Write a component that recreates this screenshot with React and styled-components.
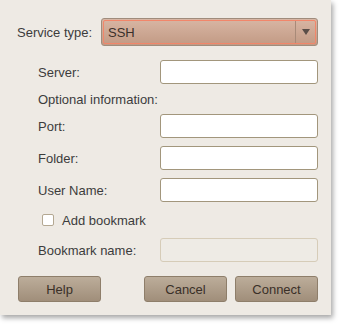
import React from "react";
import styled, { createGlobalStyle } from "styled-components";

const Global = createGlobalStyle`
  html, body { margin: 0; padding: 0; background: #ffffff; }
  body { font-family: "Liberation Sans", Arial, sans-serif; font-size: 13px; color: #3c3c3c; }
  #root { width: 340px; height: 324px; }
`;

const Panel = styled.div`
  width: 331px;
  height: 315px;
  box-sizing: border-box;
  background: #eeeae4;
  box-shadow: 2px 3px 5px rgba(0, 0, 0, 0.35);
  padding: 18px 13px 0 17px;
  display: flex;
  flex-direction: column;
`;

const ServiceRow = styled.div`
  display: grid;
  grid-template-columns: 84px 217px;
  align-items: center;
  height: 28px;
`;

const Label = styled.span`
  color: #3c3c3c;
  font-size: 13px;
  white-space: nowrap;
`;

const Combo = styled.div`
  height: 28px;
  box-sizing: border-box;
  border: 1px solid #a08c7c;
  border-radius: 3px;
  background: linear-gradient(#d8b6a4, #c29a84);
  padding: 1px;
  display: flex;
`;

const ComboInner = styled.div`
  flex: 1;
  display: flex;
  align-items: center;
  border: 1px solid #f2866a;
  border-radius: 2px;
`;

const ComboText = styled.span`
  flex: 1;
  padding-left: 4px;
  color: #3a302a;
  font-size: 13px;
`;

const ComboArrow = styled.div`
  width: 19px;
  align-self: stretch;
  border-left: 1px solid #a88a78;
  display: flex;
  align-items: center;
  justify-content: center;
`;

const Form = styled.div`
  padding-left: 21px;
  display: flex;
  flex-direction: column;
`;

const FieldRow = styled.div`
  display: grid;
  grid-template-columns: 122px 158px;
  align-items: center;
  height: 24px;
  margin-top: ${(p) => p.$gap}px;
`;

const Entry = styled.div`
  height: 24px;
  box-sizing: border-box;
  border: 1px solid ${(p) => (p.$disabled ? "#d6ccb8" : "#a2967c")};
  border-radius: 3px;
  background: ${(p) => (p.$disabled ? "#eeebe5" : "#ffffff")};
`;

const TextRow = styled.div`
  height: 30px;
  display: flex;
  align-items: center;
`;

const CheckRow = styled.div`
  height: 36px;
  display: flex;
  align-items: center;
  padding-left: 4px;
  gap: 8px;
`;

const Check = styled.div`
  width: 12px;
  height: 12px;
  box-sizing: border-box;
  border: 1px solid #b4a892;
  border-radius: 2px;
  background: #ffffff;
`;

const ButtonRow = styled.div`
  display: flex;
  margin-top: 14px;
  padding-left: 1px;
  gap: 8px;
`;

const Spacer = styled.div`
  flex: 1;
`;

const Button = styled.div`
  width: 83px;
  height: 26px;
  box-sizing: border-box;
  border: 1px solid #8e7e6a;
  border-radius: 3px;
  background: linear-gradient(#bcad9a, #a08e7a);
  display: flex;
  align-items: center;
  justify-content: center;
  color: #3a3028;
  font-size: 13px;
`;

export default function App() {
  return (
    <>
      <Global />
      <Panel>
        <ServiceRow>
          <Label>Service type:</Label>
          <Combo>
            <ComboInner>
              <ComboText>SSH</ComboText>
              <ComboArrow>
                <svg width="8" height="6" viewBox="0 0 8 6">
                  <polygon points="0,0 8,0 4,6" fill="#5a4e48" />
                </svg>
              </ComboArrow>
            </ComboInner>
          </Combo>
        </ServiceRow>
        <Form>
          <FieldRow $gap={14}>
            <Label>Server:</Label>
            <Entry />
          </FieldRow>
          <TextRow>
            <Label>Optional information:</Label>
          </TextRow>
          <FieldRow $gap={0}>
            <Label>Port:</Label>
            <Entry />
          </FieldRow>
          <FieldRow $gap={8}>
            <Label>Folder:</Label>
            <Entry />
          </FieldRow>
          <FieldRow $gap={8}>
            <Label>User Name:</Label>
            <Entry />
          </FieldRow>
          <CheckRow>
            <Check />
            <Label>Add bookmark</Label>
          </CheckRow>
          <FieldRow $gap={0}>
            <Label>Bookmark name:</Label>
            <Entry $disabled />
          </FieldRow>
        </Form>
        <ButtonRow>
          <Button>Help</Button>
          <Spacer />
          <Button>Cancel</Button>
          <Button>Connect</Button>
        </ButtonRow>
      </Panel>
    </>
  );
}
